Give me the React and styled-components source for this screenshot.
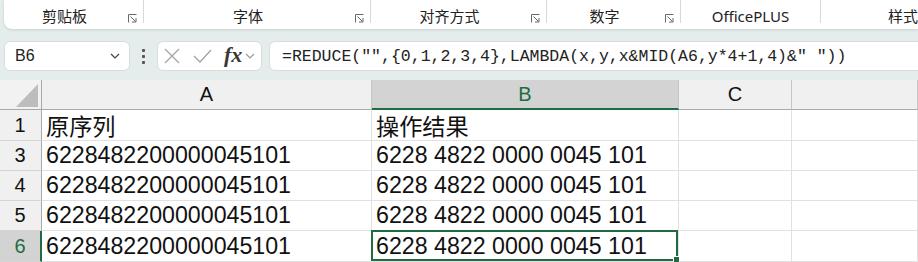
import React from 'react';
import styled, { createGlobalStyle } from 'styled-components';

const GREEN = '#1f6b42';

const GlobalStyle = createGlobalStyle`
  html, body {
    margin: 0;
    padding: 0;
  }
  body {
    background: #e4ecec;
    font-family: 'Liberation Sans', 'Noto Sans CJK SC', sans-serif;
    overflow: hidden;
  }
`;

const Screen = styled.div`
  width: 918px;
  height: 262px;
  overflow: hidden;
  background: #e4ecec;
`;

/* ---------- ribbon ---------- */

const Ribbon = styled.div`
  display: flex;
  height: 29px;
  margin-left: 4px;
  background: #fff;
  border-bottom-left-radius: 8px;
  box-shadow: 0 1px 3px rgba(0, 0, 0, 0.12);
`;

const Group = styled.div`
  flex: none;
  width: ${({ $w }) => $w}px;
  height: 23px;
  padding-top: 10px;
  box-sizing: border-box;
  display: flex;
  align-items: center;
  border-right: ${({ $last }) => ($last ? 'none' : '1px solid #d9d9d9')};
`;

const GroupLabel = styled.span`
  flex: 1;
  text-align: center;
  font-family: 'Noto Sans', 'Noto Sans CJK SC', sans-serif;
  font-size: 15px;
  line-height: 13px;
  color: #222;
  white-space: nowrap;
`;

const LauncherIcon = styled.svg`
  flex: none;
  align-self: flex-end;
  width: 9px;
  height: 9px;
  margin: 0 6px 0 3px;
`;

const Launcher = () => (
  <LauncherIcon viewBox="0 0 9 9" fill="none" stroke="#6a6a6a" strokeWidth="1">
    <path d="M0.5 8.5V0.5H8.5" />
    <path d="M2.5 2.5L7.5 7.5" />
    <path d="M4 8H8V4" />
  </LauncherIcon>
);

const groups = [
  { label: '剪贴板', w: 140, launcher: true },
  { label: '字体', w: 227, launcher: true },
  { label: '对齐方式', w: 176, launcher: true },
  { label: '数字', w: 134, launcher: true },
  { label: 'OfficePLUS', w: 140 },
  { label: '样式', w: 164, last: true },
];

/* ---------- formula bar ---------- */

const FormulaBar = styled.div`
  display: flex;
  align-items: center;
  height: 30px;
  margin-top: 12px;
  padding-left: 4px;
`;

const Box = styled.div`
  flex: none;
  height: 30px;
  box-sizing: border-box;
  background: #fff;
  border: 1px solid #d8dede;
  border-radius: 6px;
  display: flex;
  align-items: center;
`;

const NameBox = styled(Box)`
  width: 126px;
  padding: 0 9px 0 10px;
  justify-content: space-between;
  font-size: 16px;
  color: #222;
`;

const Dots = styled.div`
  flex: none;
  width: 27px;
  display: flex;
  flex-direction: column;
  align-items: center;
  gap: 3px;

  span {
    width: 3px;
    height: 3px;
    border-radius: 1px;
    background: #555;
  }
`;

const FuncBox = styled(Box)`
  width: 105px;
  margin-right: 7px;
  padding-left: 6px;
`;

const Fx = styled.span`
  font-family: 'Liberation Serif', serif;
  font-style: italic;
  font-weight: bold;
  font-size: 22px;
  color: #383838;
  margin: 0 3px 0 12px;
  line-height: 1;
  padding-bottom: 3px;
`;

const FormulaBox = styled(Box)`
  flex: 1;
  margin-right: -20px;
  padding-left: 12px;
  font-family: 'Liberation Mono', monospace;
  font-size: 16.5px;
  color: #222;
  white-space: nowrap;
`;

const Chevron = ({ color = '#444', w = 10 }) => (
  <svg width={w} height="6" viewBox="0 0 10 6" fill="none" stroke={color} strokeWidth="1.2">
    <path d="M1 1L5 5L9 1" />
  </svg>
);

const CrossIcon = () => (
  <svg width="16" height="16" viewBox="0 0 16 16" stroke="#a3a3a3" strokeWidth="1.3">
    <path d="M1 1L15 15M15 1L1 15" />
  </svg>
);

const CheckIcon = () => (
  <svg width="19" height="14" viewBox="0 0 19 14" fill="none" stroke="#a3a3a3" strokeWidth="1.3" style={{ marginLeft: 13 }}>
    <path d="M1 7L7 13L18 1" />
  </svg>
);

/* ---------- sheet ---------- */

const Sheet = styled.div`
  margin-top: 9px;
  display: grid;
  grid-template-columns: 42px 330px 307px 113px 1fr;
  grid-template-rows: 30px 31px 30px 30px 30px 31px;
  background: #fff;
`;

const Corner = styled.div`
  background: #f2f2f2;
  border-right: 1px solid #a9a9a9;
  border-bottom: 1px solid #a9a9a9;
  display: flex;
  align-items: flex-end;
  justify-content: flex-end;
  padding: 0 3px 2px 0;
`;

const ColHead = styled.div`
  background: ${({ $sel }) => ($sel ? '#d3d3d3' : '#f0f0f0')};
  color: ${({ $sel }) => ($sel ? GREEN : '#111')};
  border-right: 1px solid #c6c6c6;
  border-bottom: ${({ $sel }) => ($sel ? `2px solid ${GREEN}` : '1px solid #a9a9a9')};
  display: flex;
  align-items: center;
  justify-content: center;
  font-size: 20px;
`;

const RowHead = styled.div`
  background: ${({ $sel }) => ($sel ? '#d3d3d3' : '#f0f0f0')};
  color: ${({ $sel }) => ($sel ? GREEN : '#111')};
  border-right: ${({ $sel }) => ($sel ? `2px solid ${GREEN}` : '1px solid #a9a9a9')};
  border-bottom: 1px solid #d4d4d4;
  display: flex;
  align-items: center;
  justify-content: center;
  font-size: 20px;
  padding-right: ${({ $sel }) => ($sel ? '0' : '1px')};
`;

const Cell = styled.div`
  position: relative;
  border-right: 1px solid #e1e1e1;
  border-bottom: 1px solid #e1e1e1;
  display: flex;
  align-items: center;
  padding-left: 4px;
  font-size: 23.2px;
  color: #111;
  white-space: nowrap;

  ${({ $active }) =>
    $active &&
    `
    &::after {
      content: '';
      position: absolute;
      top: -1px;
      left: -1px;
      right: 0;
      bottom: 0;
      border: 2px solid ${GREEN};
    }
    &::before {
      content: '';
      position: absolute;
      right: -2px;
      bottom: -2px;
      width: 5px;
      height: 5px;
      background: ${GREEN};
      border: 1px solid #fff;
      z-index: 2;
    }
  `}
`;

const source = '6228482200000045101';
const result = source.replace(/(\d{4})(?=\d)/g, '$1 ');

const rows = [
  { n: 1, a: '原序列', b: '操作结果' },
  { n: 3, a: source, b: result },
  { n: 4, a: source, b: result },
  { n: 5, a: source, b: result },
  { n: 6, a: source, b: result, sel: true },
];

export default function App() {
  return (
    <Screen>
      <GlobalStyle />
      <Ribbon>
        {groups.map((g) => (
          <Group key={g.label} $w={g.w} $last={g.last}>
            <GroupLabel>{g.label}</GroupLabel>
            {g.launcher && <Launcher />}
          </Group>
        ))}
      </Ribbon>

      <FormulaBar>
        <NameBox>
          <span>B6</span>
          <Chevron />
        </NameBox>
        <Dots>
          <span />
          <span />
          <span />
        </Dots>
        <FuncBox>
          <CrossIcon />
          <CheckIcon />
          <Fx>fx</Fx>
          <Chevron color="#9a9a9a" />
        </FuncBox>
        <FormulaBox>=REDUCE("",{'{'}0,1,2,3,4{'}'},LAMBDA(x,y,x&amp;MID(A6,y*4+1,4)&amp;" "))</FormulaBox>
      </FormulaBar>

      <Sheet>
        <Corner>
          <svg width="22" height="23" viewBox="0 0 22 23">
            <path d="M22 0V23H0Z" fill="#bdbdbd" />
          </svg>
        </Corner>
        <ColHead>A</ColHead>
        <ColHead $sel>B</ColHead>
        <ColHead>C</ColHead>
        <ColHead />
        {rows.map((r) => (
          <React.Fragment key={r.n}>
            <RowHead $sel={r.sel}>{r.n}</RowHead>
            <Cell>{r.a}</Cell>
            <Cell $active={r.sel}>{r.b}</Cell>
            <Cell />
            <Cell />
          </React.Fragment>
        ))}
      </Sheet>
    </Screen>
  );
}
